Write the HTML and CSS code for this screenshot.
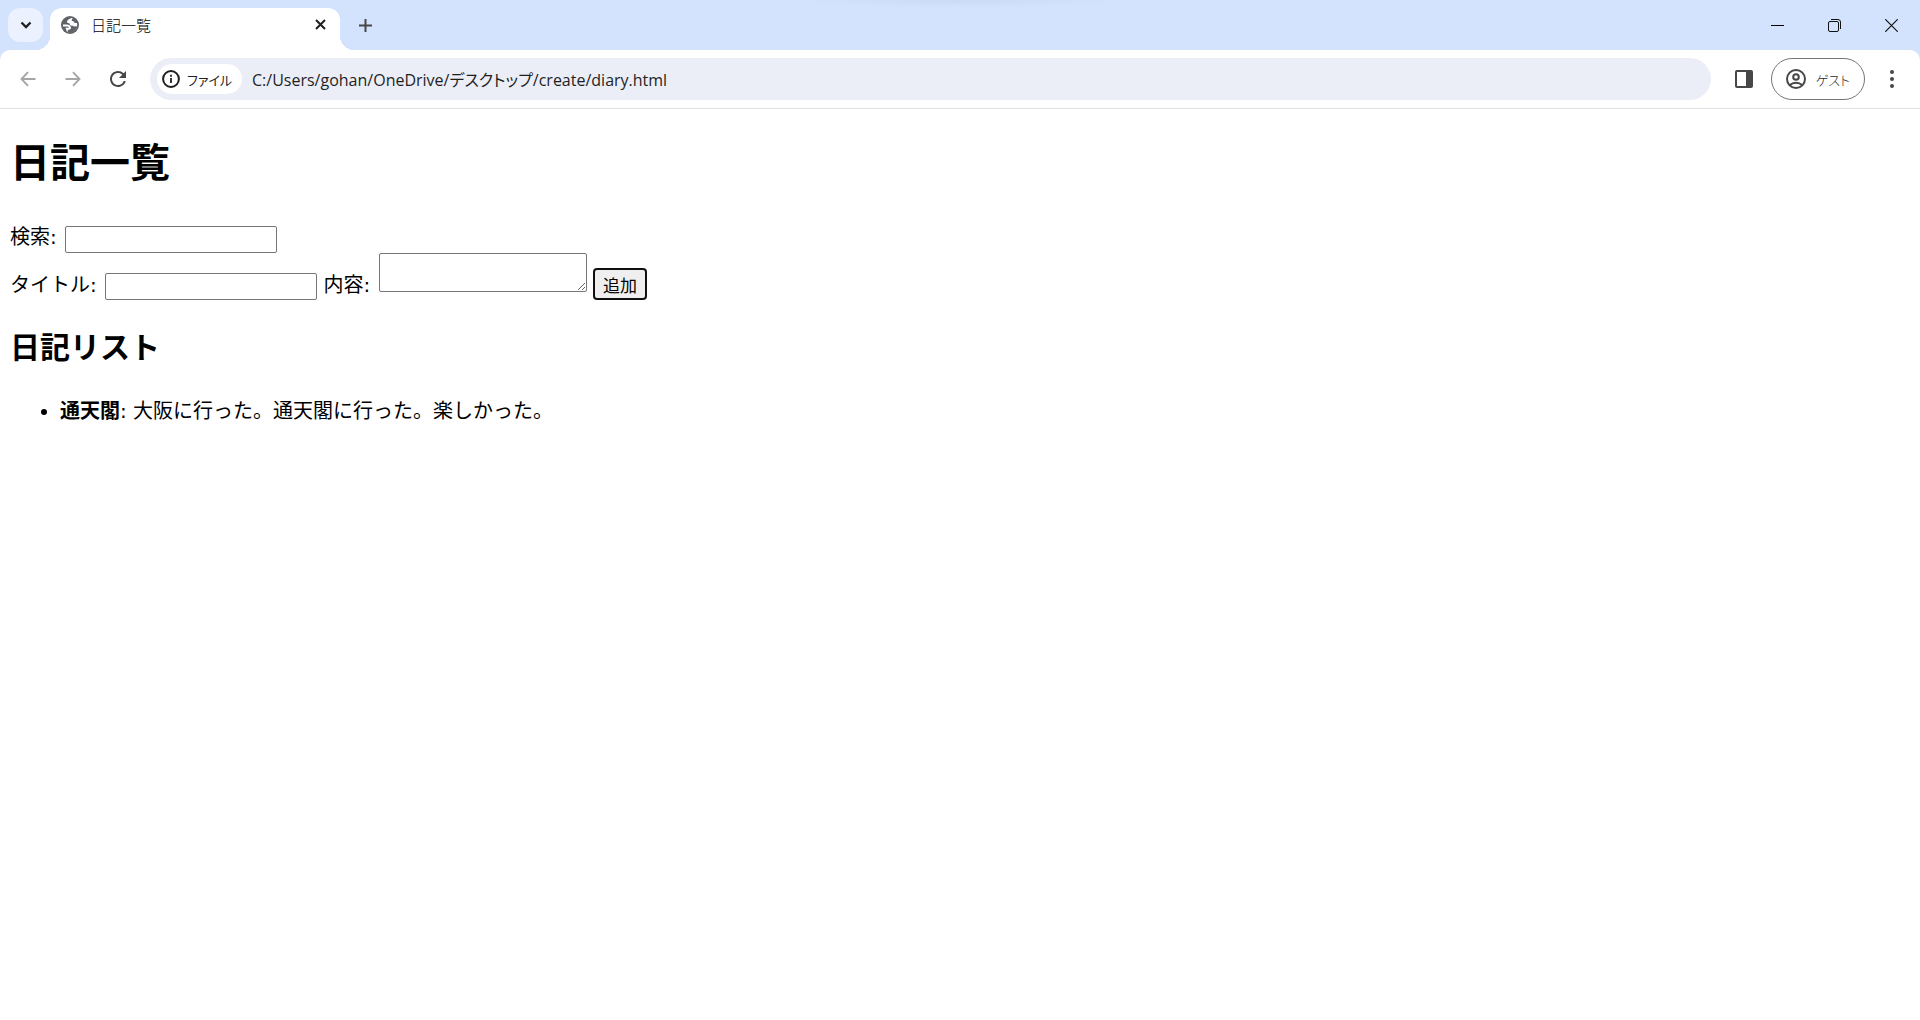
FILE: index.html
```
<!DOCTYPE html>
<html lang="ja">
<head>
  <meta charset="UTF-8">
  <title>日記一覧</title>
  <link rel="stylesheet" href="styles.css">
</head>
<body>
  <header class="browser">
    <div class="tab-strip">
      <button class="tab-search" aria-label="タブを検索">
        <svg width="12" height="8" viewBox="0 0 12 8"><path d="M1.500 1.500 6 6l4.500-4.500" fill="none" stroke="#1f1f1f" stroke-width="2.300"/></svg>
      </button>
      <div class="tab">
        <svg width="18" height="18" viewBox="0 0 18 18"><circle cx="9" cy="9" r="9" fill="#5f6368"/><path fill="#fff" d="M11 2C8.500 2.500 6 4 6 5.800c0 1.200 1 1.500 2.500 1.400.2 1.800 1.300 2.500 3.500 2.600.8 1 2.300.8 4.200.2-.6 3.200-3.500 6-7.200 6.200-1 0-1.600-.1-2.200-.3v-2.200c2 0 3.300-.4 3.200-2C9.900 9.500 8 8.600 5.500 8.500H2v2h4c1 0 1.800.4 2 1.300H4.500l1.300 3.600c4.500 2.300 10.700-.9 10.400-6.900l-.3-1.500h-2.400C13.400 5.600 12.500 5 10.800 5c0-1.200.2-1.800.9-2.400z"/></svg>
        <span class="tab-title">日記一覧</span>
        <button class="icon-btn tab-close" aria-label="閉じる">
          <svg width="11" height="11" viewBox="0 0 11 11"><path d="M1 1l9 9M10 1l-9 9" stroke="#1f1f1f" stroke-width="2"/></svg>
        </button>
      </div>
      <button class="icon-btn new-tab" aria-label="新しいタブ">
        <svg width="13" height="13" viewBox="0 0 13 13"><path d="M6.500 0v13M0 6.500h13" stroke="#474747" stroke-width="2"/></svg>
      </button>
      <div class="window-controls">
        <button class="icon-btn" aria-label="最小化">
          <svg width="13" height="13" viewBox="0 0 13 13"><path d="M0 6.500h13" stroke="#000"/></svg>
        </button>
        <button class="icon-btn" aria-label="元に戻す">
          <svg width="13" height="13" viewBox="0 0 13 13" fill="none" stroke="#111"><rect x=".5" y="2.500" width="10" height="10" rx="1.500"/><path d="M3 .5h7a2.500 2.500 0 0 1 2.500 2.500v7"/></svg>
        </button>
        <button class="icon-btn" aria-label="ウィンドウを閉じる">
          <svg width="13" height="13" viewBox="0 0 13 13"><path d="M.3.300l12.400 12.400M12.700.300.300 12.700" stroke="#111" stroke-width="1.200"/></svg>
        </button>
      </div>
    </div>

    <div class="toolbar">
      <button class="icon-btn nav-btn" aria-label="戻る">
        <svg width="16" height="16" viewBox="0 0 16 16"><path d="M15.500 8H2M8 1.200 1.500 8 8 14.800" fill="none" stroke="#a6a6a6" stroke-width="1.900"/></svg>
      </button>
      <button class="icon-btn nav-btn" aria-label="進む">
        <svg width="16" height="16" viewBox="0 0 16 16"><path d="M.5 8H14M8 1.200 14.500 8 8 14.800" fill="none" stroke="#a6a6a6" stroke-width="1.900"/></svg>
      </button>
      <button class="icon-btn nav-btn" aria-label="再読み込み">
        <svg width="16" height="16" viewBox="4 4 16 16"><path fill="#474747" d="M17.650 6.350A7.958 7.958 0 0 0 12 4c-4.420 0-7.990 3.580-7.990 8s3.570 8 7.990 8c3.730 0 6.840-2.550 7.730-6h-2.080A5.990 5.990 0 0 1 12 18c-3.310 0-6-2.690-6-6s2.690-6 6-6c1.660 0 3.140.690 4.220 1.780L13 11h7V4l-2.350 2.350z"/></svg>
      </button>
      <div class="omnibox">
        <button class="site-info">
          <svg width="18" height="18" viewBox="0 0 18 18"><circle cx="9" cy="9" r="7.900" fill="none" stroke="#1f1f1f" stroke-width="2"/><path d="M9 8v5M9 4.800v2" stroke="#1f1f1f" stroke-width="1.800"/></svg>
          <span>ファイル</span>
        </button>
        <input class="address" type="text" aria-label="アドレス" value="C:/Users/gohan/OneDrive/デスクトップ/create/diary.html">
      </div>
      <button class="icon-btn side-panel" aria-label="サイドパネル">
        <svg width="18" height="18" viewBox="0 0 18 18"><rect width="18" height="18" rx="2" fill="#474747"/><path fill="#fff" d="M2 2h9v14H2z"/></svg>
      </button>
      <button class="profile">
        <svg width="20" height="20" viewBox="0 0 20 20" fill="none" stroke="#474747" stroke-width="2"><circle cx="10" cy="10" r="9"/><circle cx="10" cy="8" r="2.800"/><path d="M3.800 16.200c3.200-3.200 9.200-3.200 12.400 0"/></svg>
        <span>ゲスト</span>
      </button>
      <button class="icon-btn menu" aria-label="メニュー">
        <svg width="4" height="18" viewBox="0 0 4 18" fill="#474747"><circle cx="2" cy="2" r="2"/><circle cx="2" cy="9" r="2"/><circle cx="2" cy="16" r="2"/></svg>
      </button>
    </div>
  </header>

  <main class="page">
    <h1>日記一覧</h1>
    <div class="search-row">
      <label for="search">検索:</label>
      <input type="text" id="search">
    </div>
    <form id="diaryForm">
      <label for="title">タイトル:</label>
      <input type="text" id="title">
      <label for="content">内容:</label>
      <textarea id="content"></textarea>
      <button type="button" class="add-btn">追加</button>
    </form>
    <h2>日記リスト</h2>
    <ul id="diaryList">
      <li><strong>通天閣</strong>: 大阪に行った。通天閣に行った。楽しかった。</li>
    </ul>
  </main>
</body>
</html>
```
FILE: styles.css
```
* {
  box-sizing: border-box;
}

body {
  margin: 0;
  background: #fff;
  color: #000;
  font-family: "Open Sans", "Noto Sans CJK JP", sans-serif;
}

button {
  font-family: inherit;
}

svg {
  display: block;
  flex: none;
}

/* browser window */
.browser {
  background: #d3e3fd;
  color: #1f1f1f;
}

.tab-strip {
  display: flex;
  align-items: center;
  height: 50px;
  padding-left: 8px;
  background: radial-gradient(160px 8px at 50% 0, #cadaf5, #d3e3fd);
}

.icon-btn {
  display: flex;
  align-items: center;
  justify-content: center;
  padding: 0;
  border: none;
  background: none;
}

.tab-search {
  display: flex;
  align-items: center;
  justify-content: center;
  width: 35px;
  height: 34px;
  padding: 0;
  border: none;
  border-radius: 12px;
  background: #ebf1fe;
}

.tab {
  position: relative;
  display: flex;
  align-items: center;
  align-self: flex-end;
  width: 290px;
  height: 42px;
  margin-left: 7px;
  padding: 0 8px 9px 11px;
  border-radius: 12px 12px 0 0;
  background: #fff;
}

/* curved feet of the active tab */
.tab::before,
.tab::after {
  content: "";
  position: absolute;
  bottom: 0;
  width: 14px;
  height: 14px;
}

.tab::before {
  right: 100%;
  background: radial-gradient(circle at 0 0, transparent 14px, #fff 14px);
}

.tab::after {
  left: 100%;
  background: radial-gradient(circle at 100% 0, transparent 14px, #fff 14px);
}

.tab-title {
  flex: 1;
  margin-left: 12px;
  color: #000;
  font-size: 15px;
  font-weight: 300;
}

.tab-close {
  width: 24px;
  height: 24px;
}

.new-tab {
  width: 34px;
  height: 34px;
  margin-left: 8px;
}

.window-controls {
  display: flex;
  align-self: stretch;
  margin-left: auto;
}

.window-controls .icon-btn {
  width: 57px;
}

.toolbar {
  display: flex;
  align-items: center;
  height: 59px;
  padding: 0 12px 0 5px;
  border-bottom: 1px solid #dfe1e1;
  border-radius: 10px 10px 0 0;
  background: #fff;
}

.nav-btn {
  width: 45px;
  height: 42px;
}

.omnibox {
  display: flex;
  flex: 1;
  align-items: center;
  height: 42px;
  margin-left: 10px;
  padding: 0 7px;
  border-radius: 21px;
  background: #ebeef7;
}

.site-info {
  display: flex;
  align-items: center;
  gap: 7px;
  height: 30px;
  padding: 0 10px 0 5px;
  border: none;
  border-radius: 15px;
  background: #fff;
  color: #1f1f1f;
  font-size: 13px;
  font-feature-settings: "palt";
}

.address {
  flex: 1;
  height: 36px;
  padding: 0;
  border: none;
  margin-left: 10px;
  outline: none;
  background: none;
  color: #1f1f1f;
  font-family: inherit;
  font-size: 16px;
  font-feature-settings: "palt";
}

.side-panel {
  width: 42px;
  height: 42px;
  margin-left: 12px;
}

.profile {
  display: flex;
  align-items: center;
  gap: 10px;
  height: 42px;
  margin-left: 6px;
  padding: 0 14px;
  border: 1px solid #747775;
  border-radius: 21px;
  background: #fff;
  color: #1f1f1f;
  font-size: 13px;
  font-weight: 300;
  font-feature-settings: "palt";
}

.menu {
  width: 32px;
  height: 42px;
  margin-left: 11px;
}

/* diary page */
.page {
  padding: 1px 10px;
  font-family: "DejaVu Sans", "Noto Sans CJK JP", sans-serif;
  font-size: 20px;
  line-height: 30px;
}

h1 {
  margin: 23px 0 29px;
  font-size: 40px;
  line-height: 60px;
}

h2 {
  margin: 25px 0 26px;
  font-size: 30px;
  line-height: 45px;
}

label {
  margin-right: 2px;
}

input[type="text"]:not(.address) {
  width: 212px;
  height: 27px;
  border: 1px solid #767676;
  border-radius: 2px;
  font-size: 17px;
}

textarea {
  width: 208px;
  height: 39px;
  border: 1px solid #767676;
  border-radius: 2px;
  font-size: 17px;
}

.add-btn {
  height: 32px;
  padding: 0 8px;
  border: 2px solid #101010;
  border-radius: 4px;
  background: #efefef;
  color: #000;
  font-size: 17px;
}

ul {
  margin: 0;
  padding-left: 50px;
}
```
